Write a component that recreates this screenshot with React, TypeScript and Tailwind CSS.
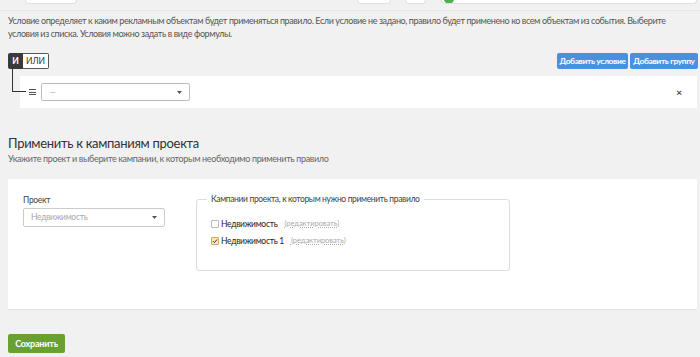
const font = { fontFamily: 'Lato, "Open Sans", sans-serif' };

const Caret = () => (
  <svg width="5" height="3" viewBox="0 0 5 3" className="shrink-0">
    <path d="M0 0h5L2.5 3z" fill="#555" />
  </svg>
);

const App = () => {
  return (
    <div className="min-h-[357px] w-[700px] bg-[#f1f1f1] text-[#333] overflow-hidden" style={font}>
      {/* cut-off top bar */}
      <div className="h-[11px] border-b border-[#e6e6e6]">
        <div className="flex h-[4px]">
          <div className="ml-[25px] w-[52px] h-[4px] bg-white border-x border-b border-[#e0e0e0] rounded-b-lg" />
          <div className="ml-[280px] w-[34px] h-[4px] bg-white border-x border-b border-[#e0e0e0] rounded-b-lg" />
          <div className="ml-[14px] w-[21px] h-[4px] bg-white border-x border-b border-[#e0e0e0] rounded-b-lg" />
          <div className="ml-[15px] flex-1 h-[4px] bg-white border-x border-b border-[#e0e0e0] rounded-b-lg mr-[3px] relative overflow-hidden">
            <div className="absolute left-[2px] -top-[6px] w-[10px] h-[10px] rounded-full bg-[#4caf50]" />
          </div>
        </div>
      </div>

      <div className="px-2">
        <p className="mt-[3px] w-[684px] text-[9px] leading-[13px] tracking-[-0.4px] text-[#555]">
          Условие определяет к каким рекламным объектам будет применяться правило. Если условие не задано, правило будет
          применено ко всем объектам из события. Выберите условия из списка. Условия можно задать в виде формулы.
        </p>

        <div className="mt-[13px] flex items-center justify-between">
          <div className="flex h-[16px] text-[8.5px] font-bold">
            <div className="w-[15px] bg-[#3a3a3a] text-white flex items-center justify-center rounded-l-[2px]">И</div>
            <div className="w-[26px] bg-white border border-[#555] border-l-0 flex items-center justify-center rounded-r-[2px] font-normal">
              ИЛИ
            </div>
          </div>
          <div className="flex gap-[2px] -mr-[6px]">
            <button className="h-[16px] w-[71px] bg-[#4a90e2] text-white text-[8.4px] tracking-[-0.35px] font-bold rounded-[2px]">
              Добавить условие
            </button>
            <button className="h-[16px] w-[68px] bg-[#4a90e2] text-white text-[8.4px] tracking-[-0.35px] font-bold rounded-[2px]">
              Добавить группу
            </button>
          </div>
        </div>

        <div className="relative mt-[7px] ml-[12px] mr-[-5px] h-[32px] bg-white flex items-center pl-[9px] pr-[15px]">
          <div className="absolute -left-[8px] -top-[7px] w-[14px] h-[23px] border-l-[1.5px] border-b-[1.5px] border-[#333]" />
          <div className="flex flex-col gap-[1.5px] w-[7px]">
            <span className="h-[1px] bg-[#555]" />
            <span className="h-[1px] bg-[#555]" />
            <span className="h-[1px] bg-[#555]" />
          </div>
          <div className="ml-[5px] w-[149px] h-[18px] border border-[#bbb] rounded-[2px] flex items-center justify-between px-[7px]">
            <span className="text-[9px] text-[#bbb]">—</span>
            <Caret />
          </div>
          <span className="ml-auto text-[10px] font-bold text-[#444]">×</span>
        </div>

        <h2 className="mt-[26px] text-[13px] leading-[18px] tracking-[-0.3px] text-[#333]">Применить к кампаниям проекта</h2>
        <p className="mt-[1px] text-[9px] leading-[12px] tracking-[-0.35px] text-[#666]">
          Укажите проект и выберите кампании, к которым необходимо применить правило
        </p>

        <div className="mt-[14px] -mr-[5px] h-[131px] bg-white border-b border-[#e4e4e4] flex pl-[15px] pt-[15px]">
          <div className="w-[142px]">
            <div className="text-[8.5px] tracking-[-0.3px] text-[#444] leading-[12px]">Проект</div>
            <div className="mt-[2px] h-[19px] border border-[#ccc] rounded-[2px] flex items-center justify-between px-[7px]">
              <span className="text-[8.5px] tracking-[-0.3px] text-[#aaa]">Недвижимость</span>
              <Caret />
            </div>
          </div>
          <fieldset className="ml-[31px] -mt-[1px] w-[314px] h-[78px] border border-[#ddd] rounded-[3px] px-[14px]">
            <legend className="px-[4px] -ml-[4px] text-[8.5px] tracking-[-0.35px] text-[#444]">
              Кампании проекта, к которым нужно применить правило
            </legend>
            <label className="mt-[12px] flex items-center gap-[2px] text-[8.5px] tracking-[-0.3px] text-[#222]">
              <span className="w-[8px] h-[8px] border border-[#bbb] rounded-[1px] bg-white" />
              <span>Недвижимость</span>
              <span className="ml-[5px] text-[7.6px] tracking-[-0.1px] text-[#aaa] underline decoration-dotted">(редактировать)</span>
            </label>
            <label className="mt-[4px] flex items-center gap-[2px] text-[8.5px] tracking-[-0.3px] text-[#222]">
              <span className="w-[8px] h-[8px] border border-[#c9a85a] rounded-[1px] bg-[#f6e7bf] flex items-center justify-center">
                <svg width="6" height="6" viewBox="0 0 6 6">
                  <path d="M1 3.2l1.4 1.4L5 1.5" stroke="#333" strokeWidth="1" fill="none" />
                </svg>
              </span>
              <span>Недвижимость 1</span>
              <span className="ml-[5px] text-[7.6px] tracking-[-0.1px] text-[#aaa] underline decoration-dotted">(редактировать)</span>
            </label>
          </fieldset>
        </div>

        <button className="mt-[24px] h-[19px] w-[57px] bg-[#68a131] text-white text-[9px] tracking-[-0.2px] font-bold rounded-[2px]">
          Сохранить
        </button>
      </div>
    </div>
  );
};

export default App;
